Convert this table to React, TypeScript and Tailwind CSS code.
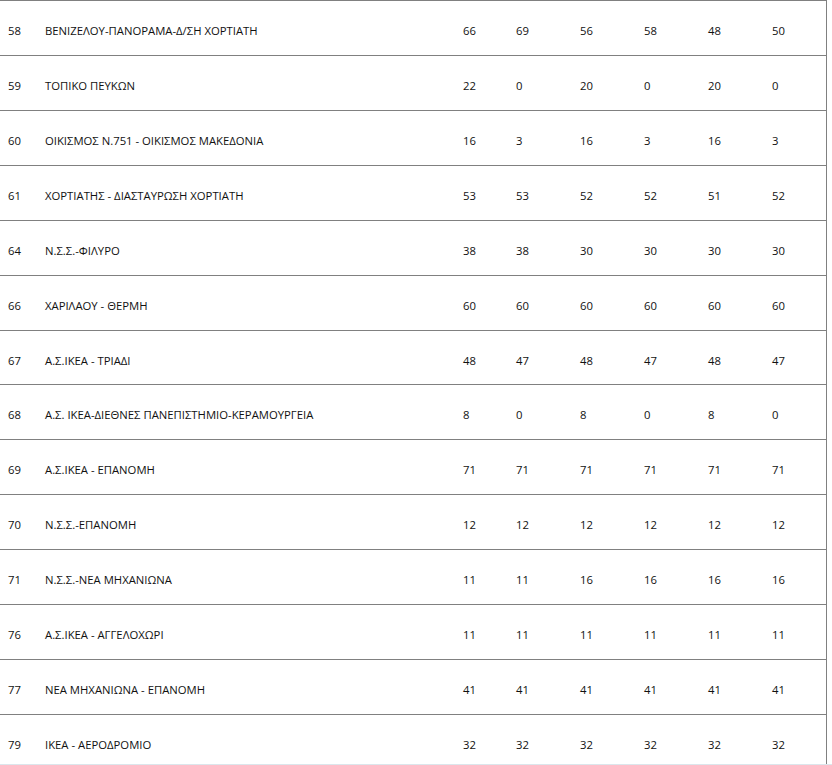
import React from "react";

const rows: [string, string, number[]][] = [
  ["58", "ΒΕΝΙΖΕΛΟΥ-ΠΑΝΟΡΑΜΑ-Δ/ΣΗ ΧΟΡΤΙΑΤΗ", [66, 69, 56, 58, 48, 50]],
  ["59", "ΤΟΠΙΚΟ ΠΕΥΚΩΝ", [22, 0, 20, 0, 20, 0]],
  ["60", "ΟΙΚΙΣΜΟΣ Ν.751 - ΟΙΚΙΣΜΟΣ ΜΑΚΕΔΟΝΙΑ", [16, 3, 16, 3, 16, 3]],
  ["61", "ΧΟΡΤΙΑΤΗΣ - ΔΙΑΣΤΑΥΡΩΣΗ ΧΟΡΤΙΑΤΗ", [53, 53, 52, 52, 51, 52]],
  ["64", "Ν.Σ.Σ.-ΦΙΛΥΡΟ", [38, 38, 30, 30, 30, 30]],
  ["66", "ΧΑΡΙΛΑΟΥ - ΘΕΡΜΗ", [60, 60, 60, 60, 60, 60]],
  ["67", "Α.Σ.ΙΚΕΑ - ΤΡΙΑΔΙ", [48, 47, 48, 47, 48, 47]],
  ["68", "Α.Σ. ΙΚΕΑ-ΔΙΕΘΝΕΣ ΠΑΝΕΠΙΣΤΗΜΙΟ-ΚΕΡΑΜΟΥΡΓΕΙΑ", [8, 0, 8, 0, 8, 0]],
  ["69", "Α.Σ.ΙΚΕΑ - ΕΠΑΝΟΜΗ", [71, 71, 71, 71, 71, 71]],
  ["70", "Ν.Σ.Σ.-ΕΠΑΝΟΜΗ", [12, 12, 12, 12, 12, 12]],
  ["71", "Ν.Σ.Σ.-ΝΕΑ ΜΗΧΑΝΙΩΝΑ", [11, 11, 16, 16, 16, 16]],
  ["76", "Α.Σ.ΙΚΕΑ - ΑΓΓΕΛΟΧΩΡΙ", [11, 11, 11, 11, 11, 11]],
  ["77", "ΝΕΑ ΜΗΧΑΝΙΩΝΑ - ΕΠΑΝΟΜΗ", [41, 41, 41, 41, 41, 41]],
  ["79", "ΙΚΕΑ - ΑΕΡΟΔΡΟΜΙΟ", [32, 32, 32, 32, 32, 32]],
];

export default function App() {
  return (
    <div
      className="relative bg-white h-[765px] overflow-hidden"
      style={{ fontFamily: '"Open Sans", "Noto Sans", sans-serif' }}
    >
      <div className="w-[827px] border-r border-[#808080]">
        {rows.map(([id, name, vals]) => (
          <div
            key={id}
            className="grid grid-cols-[37px_418px_53px_64px_64px_64px_64px_62px] h-[54.93px] border-t border-[#808080] text-[11.3px] leading-[16px] text-[#111] items-start pt-[22px]"
          >
            <div className="pl-[8px]">{id}</div>
            <div className="pl-[8px]">{name}</div>
            {vals.map((v, i) => (
              <div key={i} className="pl-[8px]">{v}</div>
            ))}
          </div>
        ))}
      </div>
      <div className="absolute left-0 bottom-0 w-[832px] h-px bg-[#dbe6ec]" />
    </div>
  );
}
